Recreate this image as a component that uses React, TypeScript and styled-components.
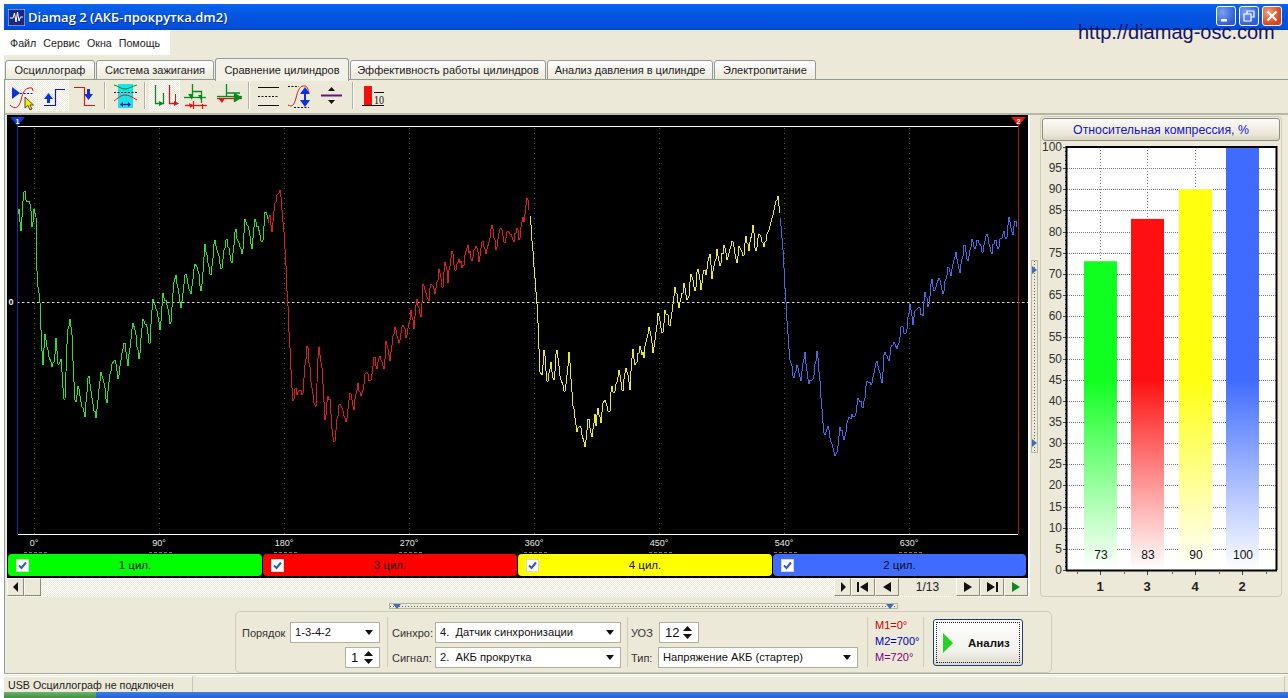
import React from "react";
import styled, { createGlobalStyle } from "styled-components";

const Global = createGlobalStyle`
  html, body { margin: 0; padding: 0; background: #fff; overflow: hidden; }
  #root { width: 1288px; height: 698px; }
  * { box-sizing: border-box; }
`;
const FONT = `"Liberation Sans", Arial, sans-serif`;

const Win = styled.div`
  position: relative; width: 1288px; height: 698px; padding: 4px 0 0 4px;
  display: flex; flex-direction: column; background: #fff; overflow: hidden;
  font-family: ${FONT}; font-size: 11px; color: #222;
`;
const TitleBar = styled.div`
  height: 26px; flex: none; display: flex; align-items: center; padding: 0 6px 0 4px;
  background: linear-gradient(180deg, #0a6af0 0%, #0560ea 12%, #0454e0 50%, #0450dc 85%, #0347c8 100%);
  color: #fff;
`;
const AppIcon = styled.svg`width: 17px; height: 17px; flex: none; margin-right: 3px;`;
const TitleText = styled.div`
  font-family: "Open Sans", ${FONT}; font-size: 13px; font-weight: 600; flex: 1;
  text-shadow: 1px 1px 0 #0a2f90;
`;
const WinBtns = styled.div`display: flex; gap: 3px; margin-top: -2px;`;
const WinBtn = styled.div<{ $close?: boolean }>`
  width: 20px; height: 20px; border: 1px solid #fff; border-radius: 3px; display: flex;
  align-items: center; justify-content: center;
  background: ${(p) => (p.$close ? "radial-gradient(circle at 30% 30%, #f0a080, #d8431c 70%)" : "radial-gradient(circle at 30% 30%, #7aa0f0, #2a5ce0 75%)")};
`;
const Url = styled.div`
  position: absolute; left: 1078px; top: 21px; font-size: 20px; color: #14146a; white-space: nowrap;
`;
const Beige = styled.div`background: #ece9d8;`;
const MenuRow = styled(Beige)`height: 27px; flex: none;`;
const MenuBar = styled.div`
  width: 166px; height: 25px; background: #fff; display: flex; align-items: center; gap: 7px; padding-left: 6px; font-size: 10.7px;
`;
const TabRow = styled(Beige)`height: 23px; flex: none; display: flex; align-items: flex-end; padding-left: 1px; gap: 1px;`;
const Tab = styled.div<{ $w: number; $on?: boolean }>`
  width: ${(p) => p.$w}px; height: ${(p) => (p.$on ? 23 : 20)}px; flex: none;
  border: 1px solid #919b9c; border-bottom: ${(p) => (p.$on ? "none" : "1px solid #919b9c")};
  border-radius: 3px 3px 0 0; display: flex; align-items: center; justify-content: center;
  background: ${(p) => (p.$on ? "#f4f2e8" : "linear-gradient(#fff, #ece9d8)")};
  margin-bottom: ${(p) => (p.$on ? -1 : 0)}px; position: relative; z-index: ${(p) => (p.$on ? 2 : 1)};
  white-space: nowrap; color: #222;
`;
const Main = styled(Beige)`
  flex: none; height: 594px; border-top: 1px solid #919b9c; border-left: 1px solid #919b9c;
  margin-top: -1px; display: flex; flex-direction: column;
`;
const Toolbar = styled.div`
  height: 35px; flex: none; display: flex; gap: 1px; padding: 0 0 2px 1px; align-items: flex-start;
  border-bottom: 2px solid #b8b6a8;
`;
const ToolBtn = styled.div<{ $on?: boolean }>`
  width: 31px; height: 31px; flex: none;
  ${(p) => p.$on && "background: repeating-conic-gradient(#fff 0 25%, #ece9d8 0 50%) 0 0 / 2px 2px; border: 1px solid #f8f7f0;"}
  svg { display: block; width: 31px; height: 31px; margin: ${(p) => (p.$on ? "-1px" : "0")}; }
`;
const ToolSep = styled.div<{ $l: number; $r: number }>`
  width: 2px; height: 27px; margin: 2px ${(p) => p.$r}px 0 ${(p) => p.$l}px; background: #b4b2a4; border-right: 1px solid #fff; flex: none;
`;
const ContentRow = styled.div`height: 482px; flex: none; display: flex; padding-left: 2px;`;
const LeftCol = styled.div`width: 1023px; flex: none; background: #fff; padding-right: 2px; display: flex; flex-direction: column;`;
const PlotBox = styled.div`width: 1021px; height: 463px; flex: none; background: #000; position: relative;`;
const PlotSvg = styled.svg`display: block; width: 1021px; height: 463px;`;
const Legend = styled.div`
  position: absolute; left: 1px; top: 439px; display: flex; gap: 1px;
`;
const LegendTile = styled.div<{ $c: string; $w: number }>`
  width: ${(p) => p.$w}px; height: 22px; background: ${(p) => p.$c}; border-radius: 4px; display: flex;
  align-items: center; position: relative; padding-left: 8px; color: #111;
`;
const LegendCheck = styled.div`
  width: 13px; height: 13px; background: #fff; border: 1px solid #d8d8d0; display: flex; align-items: center; justify-content: center; flex: none;
`;
const LegendText = styled.div`flex: 1; text-align: center; padding-right: 21px; font-size: 11.5px;`;
const ScrollRow = styled.div`
  height: 19px; flex: none; display: flex; padding-top: 0;
  background: repeating-conic-gradient(#fff 0 25%, #ece9d8 0 50%) 0 0 / 2px 2px;
`;
const SBtn = styled.div<{ $w: number }>`
  width: ${(p) => p.$w}px; height: 18px; flex: none; background: #ece9d8;
  border: 1px solid; border-color: #fbfaf4 #8d8b7e #8d8b7e #fbfaf4; display: flex; align-items: center; justify-content: center;
`;
const Spacer = styled.div`flex: 1;`;
const PageLabel = styled.div`
  width: 57px; height: 18px; flex: none; background: #ece9d8; display: flex; align-items: center; justify-content: center; font-size: 12px;
`;
const VSplit = styled.div`width: 10px; flex: none; padding: 145px 0 0 1px;`;
const VHandle = styled.div`
  width: 7px; height: 193px; border: 1px solid #b8b6a6; display: flex; flex-direction: column; align-items: center; justify-content: space-between; padding: 5px 0;
  background: repeating-linear-gradient(180deg, #666 0 1px, transparent 1px 3px) center / 1px 100% no-repeat;
`;
const Tri = styled.svg`display: block; flex: none;`;
const RightPanel = styled.div`
  width: 242px; height: 481px; margin-top: 1px; flex: none; border: 1px solid #cfccba; border-radius: 4px; padding: 1px;
  display: flex; flex-direction: column;
`;
const ChartBtn = styled.div`
  height: 23px; flex: none; border: 1px solid #8f8d80; border-radius: 3px; color: #1414c8; font-size: 12.3px;
  display: flex; align-items: center; justify-content: center; background: linear-gradient(#fbfaf6, #ece9d8 70%, #d8d5c4);
`;
const ChartSvg = styled.svg`display: block; width: 238px; height: 454px;`;
const HSplitRow = styled.div`height: 14px; flex: none; padding: 6px 0 0 384px;`;
const HHandle = styled.div`
  width: 509px; height: 6px; border: 1px solid #b8b6a6; display: flex; justify-content: space-between; align-items: center; padding: 0 3px;
  background: repeating-linear-gradient(90deg, #666 0 1px, transparent 1px 3px) center / 100% 1px no-repeat;
`;
const Controls = styled.div`
  margin-left: 230px; width: 817px; height: 62px; flex: none; border: 1px solid #cfccba; border-radius: 5px; display: flex; padding-top: 5px;
`;
const Section = styled.div<{ $w: number; $pl: number; $pr: number; $last?: boolean }>`
  width: ${(p) => p.$w}px; height: 50px; flex: none; padding: 5px ${(p) => p.$pr}px 0 ${(p) => p.$pl}px;
  ${(p) => !p.$last && "border-right: 1px solid #cfccba;"}
  display: flex; flex-direction: column; gap: 4px;
`;
const CtlRow = styled.div`height: 21px; display: flex; align-items: center; justify-content: space-between;`;
const CtlLabel = styled.div<{ $w?: number }>`
  ${(p) => p.$w && `width: ${p.$w}px;`} flex: none; color: #333; white-space: nowrap;
`;
const Field = styled.div<{ $w: number }>`
  width: ${(p) => p.$w}px; height: 21px; flex: none; background: #fff; border: 1px solid #b2af9d; display: flex; align-items: center;
  padding: 0 6px 0 4px; font-size: 11.2px; color: #111; white-space: pre; position: relative;
`;
const FieldText = styled.div`flex: 1; margin-top: -2px;`;
const SpinValue = styled.div`flex: 1; padding-left: 1px; font-size: 13px;`;
const SpinCol = styled.div`display: flex; flex-direction: column; gap: 3px;`;
const AutoRow = styled(CtlRow)`justify-content: flex-start;`;
const Marks = styled.div`display: flex; flex-direction: column; gap: 2px; margin-top: -3px;`;
const Mark = styled.div<{ $c: string }>`color: ${(p) => p.$c}; font-size: 11px; height: 14px; white-space: nowrap;`;
const RunBtn = styled.div`
  width: 90px; height: 47px; margin-top: -3px; border: 1px solid #1e3f78; border-radius: 3px; padding: 2px;
  background: linear-gradient(#fff, #f2f1ea 70%, #dcd9cc);
  display: flex;
`;
const RunInner = styled.div`
  flex: 1; border: 1px dotted #222; display: flex; align-items: center; padding-left: 6px; font-weight: 700; color: #111; font-size: 11.5px; gap: 15px;
`;
const StatusLine = styled(Beige)`height: 19px; flex: none; border-top: 1px solid #a8a698; display: flex; padding-top: 2px; box-shadow: inset 0 1px 0 #fff; position: relative;`;
const StatusCell = styled.div<{ $w?: number }>`
  ${(p) => (p.$w ? `width: ${p.$w}px; flex: none;` : "flex: 1;")} border-right: 1px solid #c8c6b8; border-top: 1px solid #fff; padding: 2px 0 0 4px; font-size: 10.7px; color: #222; white-space: nowrap;
  margin-right: 3px; border-left: 0;
`;
const Taskbar = styled.div`flex: 1; display: flex; background: linear-gradient(#3a7de8, #2460d0);`;
const StartBtn = styled.div`width: 92px; background: linear-gradient(#6fb36f, #3c8f3c);`;

/* ---------- waveform ---------- */
function rng(seed: number) {
  let a = seed;
  return () => {
    a |= 0; a = (a + 0x6d2b79f5) | 0;
    let t = Math.imul(a ^ (a >>> 15), 1 | a);
    t = (t + Math.imul(t ^ (t >>> 7), 61 | t)) ^ t;
    return ((t ^ (t >>> 14)) >>> 0) / 4294967296;
  };
}
type P = [number, number];
function lerp(a: P[], x: number) {
  for (let i = 1; i < a.length; i++) {
    if (x <= a[i][0]) {
      const k = (x - a[i - 1][0]) / (a[i][0] - a[i - 1][0] || 1);
      return a[i - 1][1] + k * (a[i][1] - a[i - 1][1]);
    }
  }
  return a[a.length - 1][1];
}
function zig(base: P[], amp: number, seed: number): P[] {
  const r = rng(seed);
  const out: P[] = [];
  let x = base[0][0]; let s = 1;
  const end = base[base.length - 1][0];
  while (x < end) {
    out.push([x, lerp(base, x) + s * amp * (0.25 + r() * 1.0)]);
    x += 2 + r() * 3.5; s = -s;
  }
  out.push([end, lerp(base, end)]);
  return out;
}
function fine(a: P[], amp: number, seed: number): string {
  const r = rng(seed);
  const pts: string[] = [];
  for (let x = a[0][0]; x <= a[a.length - 1][0]; x += 1.05) {
    pts.push(`${Math.round(x)},${Math.round(lerp(a, x) + (r() - 0.5) * amp)}`);
  }
  return pts.join(" ");
}
const greenA: P[] = [[18,213],[19,211],[21,230],[23,205],[25,184],[26,200],[28,200],[30,205],[32,232],[34,208],[36,220],[37,277],[40,303],[41,330],[43,368],[45,333],[47,345],[49,352],[51,367],[54,360],[56,337],[58,367],[61,360],[63,385],[65,407],[68,330],[71,318],[73,370],[75,407],[78,383],[81,400],[85,418],[89,370],[93,407],[96,417],[101,372],[104,382],[107,403],[111,370],[115,358],[118,383],[122,352],[125,342],[128,367],[133,322],[136,340],[139,360],[143,317],[147,328],[150,348],[153,298],[157,312],[160,332],[163,293],[167,305],[171,327],[175,273],[178,290],[181,310],[185,273],[188,283],[191,297],[195,263],[198,272],[201,293],[205,245],[208,262],[211,278],[215,240],[218,255],[221,272],[226,237],[229,250],[232,265],[236,228],[239,245],[242,257],[245,218],[249,232],[252,250],[255,217],[259,230],[262,247],[265,209],[268,222]];
const redHead: P[] = [[268,222],[270,215],[272,232],[275,205],[278,195],[279,188],[281,200],[283,225],[285,250],[287,290],[289,330],[291,370],[293,405],[296,385],[298,395],[300,388],[302,400],[305,365],[307,343],[310,370],[313,395],[316,412],[319,342],[323,387],[325,423],[327,400],[330,397],[332,430],[335,443],[338,415],[340,403],[343,410],[346,425]];
const redTail = zig([[346,412],[355,392],[375,368],[395,342],[415,312],[435,282],[455,264],[475,250],[495,240],[515,232],[524,225]], 15, 11);
const redA: P[] = [...redHead, ...redTail, [526,210],[528,196],[530,215]];
const yellowHead: P[] = [[530,215],[532,240],[535,275],[538,315],[541,385],[544,345],[547,385],[551,362],[554,385],[557,345],[561,380],[565,395],[569,350],[573,405],[577,430],[581,425],[585,448],[588,415],[592,436],[596,405]];
const yellowTail = zig([[596,425],[610,398],[630,368],[650,340],[670,310],[690,285],[710,268],[730,254],[750,243],[768,232]], 15, 23);
const yellowA: P[] = [...yellowHead, ...yellowTail, [772,218],[778,194],[780,215]];
const blueHead: P[] = [[780,215],[783,250],[786,300],[790,355],[793,378],[797,365],[801,378],[805,352],[809,385],[813,378],[817,350],[820,385],[824,435],[828,425],[832,445],[836,458],[840,425],[844,438]];
const blueTail = zig([[844,430],[860,400],[880,370],[900,335],[920,305],[940,280],[960,257],[980,247],[1000,240],[1018,226]], 14, 37);
const blueA: P[] = [...blueHead, ...blueTail];

const traces = [
  { c: "#2ee02e", p: fine(greenA, 5, 1) },
  { c: "#d82020", p: fine(redA, 6, 2) },
  { c: "#eaea24", p: fine(yellowA, 6, 3) },
  { c: "#4a68e8", p: fine(blueA, 6, 4) },
];
const gridX = [34, 159, 284, 409, 534, 659, 784, 909];
const degs = [0, 90, 180, 270, 360, 450, 540, 630];

const Plot = () => (
  <PlotSvg viewBox="7 115 1021 463">
    {gridX.map((x) => (
      <line key={x} x1={x + 0.5} x2={x + 0.5} y1={128} y2={534} stroke="#555" strokeDasharray="1 4" />
    ))}
    <line x1={17} x2={1028} y1={302.5} y2={302.5} stroke="#ddd" strokeDasharray="2.5 2.5" />
    <line x1={18} x2={1018} y1={126.5} y2={126.5} stroke="#fff" />
    <line x1={18} x2={1018} y1={534.5} y2={534.5} stroke="#fff" />
    <line x1={17.5} x2={17.5} y1={122} y2={534} stroke="#1a2aa8" strokeWidth={1} />
    <line x1={1018.5} x2={1018.5} y1={122} y2={534} stroke="#b01818" strokeWidth={1} />
    {traces.map((t) => (
      <polyline key={t.c} points={t.p} fill="none" stroke={t.c} strokeWidth={1} shapeRendering="crispEdges" />
    ))}
    <polygon points="10,117 25,117 17.5,126" fill="#1638c8" />
    <text x={17.5} y={124} textAnchor="middle" fontSize={7} fontWeight={700} fill="#fff" fontFamily="Liberation Sans">1</text>
    <polygon points="1011,117 1026,117 1018.5,126" fill="#e01818" />
    <text x={1018.5} y={124} textAnchor="middle" fontSize={7} fontWeight={700} fill="#fff" fontFamily="Liberation Sans">2</text>
    <text x={11} y={305} textAnchor="middle" fontSize={9} fontWeight={700} fill="#eee" fontFamily="Liberation Sans">0</text>
    {gridX.map((x, i) => (
      <g key={x}>
        <text x={x} y={546} textAnchor="middle" fontSize={9} fill="#e8e8e8" fontFamily="Liberation Sans">{degs[i]}°</text>
        <line x1={x - 10} x2={x + 13} y1={552.5} y2={552.5} stroke="#777" strokeDasharray="3 2" />
      </g>
    ))}
  </PlotSvg>
);

/* ---------- bars ---------- */
const Y = (v: number) => 570 - v * 4.23;
const bars = [
  { k: "g", c: "#10ff20", v: 73, x: 1084, n: "1" },
  { k: "r", c: "#ff1010", v: 83, x: 1131, n: "3" },
  { k: "y", c: "#ffff10", v: 90, x: 1179, n: "4" },
  { k: "b", c: "#3f6cff", v: 100, x: 1226, n: "2" },
];
const levels = Array.from({ length: 21 }, (_, i) => i * 5);
const minor = Array.from({ length: 101 }, (_, i) => i);
const Bars = () => (
  <ChartSvg viewBox="1042 141 238 454">
    <defs>
      {bars.map((b) => (
        <linearGradient key={b.k} id={`bar-${b.k}`} gradientUnits="userSpaceOnUse" x1="0" x2="0" y1="147" y2="570">
          <stop offset="0" stopColor={b.c} />
          <stop offset="0.55" stopColor={b.c} />
          <stop offset="1" stopColor="#fff" stopOpacity={0.95} />
        </linearGradient>
      ))}
    </defs>
    <rect x={1067} y={147} width={209} height={423} fill="#fff" />
    {bars.map((b) => (
      <line key={b.k} x1={b.x + 16.5} x2={b.x + 16.5} y1={147} y2={570} stroke="#777" strokeDasharray="1 2" />
    ))}
    {levels.map((v) => (
      <g key={v}>
        <line x1={1067} x2={1276} y1={Math.round(Y(v)) + 0.5} y2={Math.round(Y(v)) + 0.5} stroke="#777" strokeDasharray="1 1" />
        <text x={1062} y={Y(v) + 4} textAnchor="end" fontSize={12} fill="#333" fontFamily="Liberation Sans">{v}</text>
        <line x1={1063} x2={1066} y1={Math.round(Y(v)) + 0.5} y2={Math.round(Y(v)) + 0.5} stroke="#444" />
      </g>
    ))}
    {minor.map((v) => (
      <rect key={v} x={1065} y={Math.round(Y(v))} width={1} height={1} fill="#444" />
    ))}
    {bars.map((b) => (
      <g key={b.k}>
        <rect x={b.x} y={Y(b.v)} width={33} height={b.v * 4.23} fill="#fff" />
        <rect x={b.x} y={Y(b.v)} width={33} height={b.v * 4.23} fill={`url(#bar-${b.k})`} />
        <text x={b.x + 17} y={559} textAnchor="middle" fontSize={12} fill="#111" fontFamily="Liberation Sans">{b.v}</text>
        <line x1={b.x + 16.5} x2={b.x + 16.5} y1={571} y2={575} stroke="#444" />
        <text x={b.x + 16} y={591} textAnchor="middle" fontSize={13} fontWeight={700} fill="#222" fontFamily="Liberation Sans">{b.n}</text>
      </g>
    ))}
    <path d="M1067 147 H1276.5 V570" fill="none" stroke="#000" strokeWidth={2} />
    <line x1={1066.5} x2={1066.5} y1={146} y2={571} stroke="#000" strokeWidth={2} />
    <line x1={1066} x2={1277} y1={570.5} y2={570.5} stroke="#000" strokeWidth={2} />
    {[1077, 1124, 1172, 1219, 1266].map((x) => (
      <line key={x} x1={x + 0.5} x2={x + 0.5} y1={571} y2={574} stroke="#666" />
    ))}
  </ChartSvg>
);

/* ---------- small parts ---------- */
const Arrow = ({ dir, c = "#111", s = 8 }: { dir: "up" | "down" | "left" | "right"; c?: string; s?: number }) => {
  const pts = { up: "0,8 8,8 4,3", down: "0,2 8,2 4,7", left: "6,0 6,10 1,5", right: "2,0 2,10 7,5" }[dir];
  return (
    <Tri width={s} height={dir === "up" || dir === "down" ? 10 * (s / 8) : s + 2} viewBox="0 0 8 10">
      <polygon points={pts} fill={c} />
    </Tri>
  );
};
const Combo = ({ w, t }: { w: number; t: string }) => (
  <Field $w={w}>
    <FieldText>{t}</FieldText>
    <Arrow dir="down" />
  </Field>
);
const Spin = ({ w, t }: { w: number; t: string }) => (
  <Field $w={w}>
    <SpinValue>{t}</SpinValue>
    <SpinCol>
      <Tri width={9} height={5} viewBox="0 0 9 5"><polygon points="4.5,0 9,5 0,5" fill="#111" /></Tri>
      <Tri width={9} height={5} viewBox="0 0 9 5"><polygon points="0,0 9,0 4.5,5" fill="#111" /></Tri>
    </SpinCol>
  </Field>
);
const Check = () => (
  <LegendCheck>
    <svg width="9" height="9" viewBox="0 0 9 9"><path d="M1 4.5 L3.5 7 L8 1.5" fill="none" stroke="#2a5cc8" strokeWidth="2" /></svg>
  </LegendCheck>
);
const NavIcon = ({ d, c = "#111" }: { d: string; c?: string }) => (
  <svg width="14" height="12" viewBox="0 0 14 12"><path d={d} fill={c} /></svg>
);

/* ---------- toolbar icons ---------- */
const NAVY = "#101a9c"; const RED = "#d81818"; const GRN = "#0a8a1e"; const BLUE = "#0a30e0";
const icons: { on?: boolean; sep?: [number, number]; g?: React.ReactNode }[] = [
  { on: true, g: <>
    <polygon points="6,7 6,19 14,13" fill={BLUE} />
    <path d="M14 13.5 H27" stroke={NAVY} strokeDasharray="2 1.5" fill="none" />
    <path d="M4 25 C9 30 13 28 15 20 C17 11 20 7 26 8 L27 11" stroke={RED} fill="none" />
    <polygon points="19,17 19,28 22,25.5 24,30 26,29 24,25 27.5,25" fill="#ffe800" stroke="#222" strokeWidth=".8" />
  </> },
  { on: true, g: <>
    <path d="M10.5 23 V17" stroke={BLUE} strokeWidth="3" /><polygon points="6,19 15,19 10.5,13" fill={BLUE} />
    <path d="M6 25.5 H17.5 V9.5 H27" stroke={NAVY} strokeWidth="1.2" fill="none" />
  </> },
  { g: <>
    <path d="M4 7.5 H14.5 V25.5 H25" stroke={RED} strokeWidth="1.2" fill="none" />
    <path d="M18.5 9 V15" stroke={BLUE} strokeWidth="3" /><polygon points="14,14 23,14 18.5,20" fill={BLUE} />
  </> },
  { sep: [2, 3] },
  { g: <>
    <rect x="8" y="4" width="15" height="24" fill="#18e4e8" />
    <path d="M4 5 C8 6 11 9 15 9 C19 9 22 6 27 5" stroke={GRN} fill="none" />
    <path d="M4 12.5 H27" stroke="#111" strokeDasharray="2 1.5" />
    <path d="M4 21 C8 18 11 15 15 15 C19 15 22 17 27 20" stroke={RED} fill="none" />
    <path d="M12 24.5 H19" stroke={NAVY} strokeWidth="1.3" /><polygon points="10,24.5 13,22 13,27" fill={NAVY} /><polygon points="21,24.5 18,22 18,27" fill={NAVY} />
  </> },
  { sep: [2, 2] },
  { on: true, g: <>
    <path d="M6.5 5 V23.5 H14.5 V13" stroke={GRN} strokeWidth="1.3" fill="none" /><polygon points="10,21 15,23.5 10,26" fill={GRN} />
    <path d="M20.5 5 V23.5 H28" stroke={RED} strokeWidth="1.3" fill="none" /><path d="M26.5 14 V23" stroke={RED} /><polygon points="25,21 30,23.5 25,26" fill={RED} />
  </> },
  { g: <>
    <path d="M3 17.5 H25" stroke={GRN} strokeWidth="1.3" />
    <path d="M11.5 4 V17 M11.5 11.5 H20.5 V23" stroke={GRN} strokeWidth="1.3" fill="none" />
    <polygon points="7,14 12,14 11,20" fill={GRN} /><polygon points="17,15 21,15 20,20" fill={GRN} />
    <path d="M4 25.5 H26" stroke={RED} strokeWidth="1.3" /><path d="M12.5 21 V29 M21.5 24 V29" stroke={RED} strokeWidth="1.2" />
    <polygon points="8,23 13,25.5 9,28" fill={RED} />
  </> },
  { g: <>
    <path d="M4 18.5 H29" stroke={RED} strokeWidth="1.3" />
    <path d="M4 16.5 H29" stroke={GRN} strokeWidth="1.3" />
    <path d="M13.5 4 V17 M13.5 13 H27 M21.5 13 V22" stroke={GRN} strokeWidth="1.3" fill="none" />
    <polygon points="22,13 29,17.5 22,22" fill={GRN} /><polygon points="5,18 12,18 9,23" fill={RED} />
  </> },
  { sep: [3, 2] },
  { g: <>
    <path d="M5 7.5 H26 M5 25.5 H26" stroke="#111" strokeWidth="1.2" /><path d="M5 16.5 H26" stroke="#111" strokeDasharray="2 1.5" />
  </> },
  { g: <>
    <path d="M3 6.5 H14 M9 27.5 H24" stroke="#111" strokeDasharray="2 1.5" />
    <path d="M3 25 C7 27 9 26 11 18 C13 10 15 5 20 6 C22 6 23 9 24 13" stroke={RED} fill="none" />
    <path d="M20 12 V22" stroke={BLUE} strokeWidth="2" /><polygon points="15,14 25,14 20,7" fill={BLUE} /><polygon points="15,20 25,20 20,27" fill={BLUE} />
  </> },
  { g: <>
    <polygon points="11,11 18,11 14.5,7" fill="#111" />
    <path d="M4 15.5 H25" stroke="#6a1080" strokeWidth="2" />
    <polygon points="11,20 18,20 14.5,24" fill="#111" />
  </> },
  { sep: [3, 3] },
  { g: <>
    <rect x="6" y="6" width="8" height="19" fill="#f01010" />
    <path d="M4 25.5 H26" stroke="#111" />
    <path d="M16 12.5 H26" stroke="#111" />
    <text x="21" y="23.5" textAnchor="middle" fontFamily="Liberation Serif" fontSize="13" fill="#111" textLength="10" lengthAdjust="spacingAndGlyphs">10</text>
  </> },
];

const tabs = [
  { t: "Осциллограф", w: 90 },
  { t: "Система зажигания", w: 118 },
  { t: "Сравнение цилиндров", w: 134, on: true },
  { t: "Эффективность работы цилиндров", w: 196 },
  { t: "Анализ давления в цилиндре", w: 166 },
  { t: "Электропитание", w: 102 },
];
const legend = [
  { t: "1 цил.", c: "#00ff00", w: 254 },
  { t: "3 цил.", c: "#ff0000", w: 254 },
  { t: "4 цил.", c: "#ffff00", w: 254 },
  { t: "2 цил.", c: "#3f6cff", w: 253 },
];

export default function App() {
  return (
    <Win>
      <Global />
      <TitleBar>
        <AppIcon viewBox="0 0 17 17">
          <rect width="17" height="17" fill="#1a2a80" stroke="#dfe6ff" />
          <path d="M2 9 H5 L6.5 4 L8 13 L9.5 3 L11 12 L12.5 8 H15" stroke="#fff" fill="none" />
        </AppIcon>
        <TitleText>Diamag 2 (АКБ-прокрутка.dm2)</TitleText>
        <WinBtns>
          <WinBtn><svg width="12" height="12" viewBox="0 0 12 12"><rect x="1" y="9" width="6" height="2.5" fill="#fff" /></svg></WinBtn>
          <WinBtn><svg width="12" height="12" viewBox="0 0 12 12"><path d="M4 3.5 V1 H11 V7 H8 M1 4 H8 V11 H1 Z" fill="none" stroke="#fff" strokeWidth="1.2" /></svg></WinBtn>
          <WinBtn $close><svg width="12" height="12" viewBox="0 0 12 12"><path d="M1.5 1.5 L10.5 10.5 M10.5 1.5 L1.5 10.5" stroke="#fff" strokeWidth="2.2" /></svg></WinBtn>
        </WinBtns>
      </TitleBar>
      <Url>http://diamag-osc.com</Url>
      <MenuRow>
        <MenuBar>
          <span>Файл</span><span>Сервис</span><span>Окна</span><span>Помощь</span>
        </MenuBar>
      </MenuRow>
      <TabRow>
        {tabs.map((t) => <Tab key={t.t} $w={t.w} $on={t.on}>{t.t}</Tab>)}
      </TabRow>
      <Main>
        <Toolbar>
          {icons.map((ic, i) =>
            ic.sep ? <ToolSep key={i} $l={ic.sep[0]} $r={ic.sep[1]} /> : (
              <ToolBtn key={i} $on={ic.on}><svg viewBox="0 0 31 31">{ic.g}</svg></ToolBtn>
            )
          )}
        </Toolbar>
        <ContentRow>
          <LeftCol>
            <PlotBox>
              <Plot />
              <Legend>
                {legend.map((l) => (
                  <LegendTile key={l.t} $c={l.c} $w={l.w}>
                    <Check /><LegendText>{l.t}</LegendText>
                  </LegendTile>
                ))}
              </Legend>
            </PlotBox>
            <ScrollRow>
              <SBtn $w={17}><Arrow dir="left" /></SBtn>
              <SBtn $w={17} />
              <Spacer />
              <SBtn $w={17}><Arrow dir="right" /></SBtn>
              <SBtn $w={24}><NavIcon d="M1 1 H3 V11 H1 Z M12 1 V11 L4 6 Z" /></SBtn>
              <SBtn $w={24}><NavIcon d="M11 1 V11 L3 6 Z" /></SBtn>
              <PageLabel>1/13</PageLabel>
              <SBtn $w={24}><NavIcon d="M3 1 V11 L11 6 Z" /></SBtn>
              <SBtn $w={24}><NavIcon d="M2 1 V11 L10 6 Z M11 1 H13 V11 H11 Z" /></SBtn>
              <SBtn $w={24}><NavIcon d="M3 1 V11 L11 6 Z" c="#0a8a1e" /></SBtn>
            </ScrollRow>
          </LeftCol>
          <VSplit>
            <VHandle>
              <Tri width={5} height={8} viewBox="0 0 5 8"><polygon points="0,0 5,4 0,8" fill="#3c6cc0" /></Tri>
              <Tri width={5} height={8} viewBox="0 0 5 8"><polygon points="0,0 5,4 0,8" fill="#3c6cc0" /></Tri>
            </VHandle>
          </VSplit>
          <RightPanel>
            <ChartBtn>Относительная компрессия, %</ChartBtn>
            <Bars />
          </RightPanel>
        </ContentRow>
        <HSplitRow>
          <HHandle>
            <Tri width={8} height={5} viewBox="0 0 8 5"><polygon points="0,0 8,0 4,5" fill="#3c6cc0" /></Tri>
            <Tri width={8} height={5} viewBox="0 0 8 5"><polygon points="0,0 8,0 4,5" fill="#3c6cc0" /></Tri>
          </HHandle>
        </HSplitRow>
        <Controls>
          <Section $w={152} $pl={6} $pr={7}>
            <CtlRow><CtlLabel>Порядок</CtlLabel><Combo w={90} t="1-3-4-2" /></CtlRow>
            <CtlRow><span /><Spin w={35} t="1" /></CtlRow>
          </Section>
          <Section $w={240} $pl={4} $pr={6}>
            <CtlRow><CtlLabel>Синхро:</CtlLabel><Combo w={186} t="4.  Датчик синхронизации" /></CtlRow>
            <CtlRow><CtlLabel>Сигнал:</CtlLabel><Combo w={186} t="2.  АКБ прокрутка" /></CtlRow>
          </Section>
          <Section $w={240} $pl={3} $pr={8}>
            <AutoRow><CtlLabel $w={28}>УОЗ</CtlLabel><Spin w={40} t="12" /></AutoRow>
            <AutoRow><CtlLabel $w={27}>Тип:</CtlLabel><Combo w={200} t="Напряжение АКБ (стартер)" /></AutoRow>
          </Section>
          <Section $w={56} $pl={7} $pr={0}>
            <Marks>
              <Mark $c="#c80000">M1=0°</Mark>
              <Mark $c="#0000b0">M2=700°</Mark>
              <Mark $c="#800080">M=720°</Mark>
            </Marks>
          </Section>
          <Section $w={120} $pl={9} $pr={0} $last>
            <RunBtn>
              <RunInner>
                <svg width="10" height="20" viewBox="0 0 10 20"><polygon points="0,0 10,10 0,20" fill="#22d422" /></svg>
                Анализ
              </RunInner>
            </RunBtn>
          </Section>
        </Controls>
      </Main>
      <StatusLine>
        <StatusCell $w={189}>USB Осциллограф не подключен</StatusCell>
        <StatusCell />
      </StatusLine>
      <Taskbar><StartBtn /></Taskbar>
    </Win>
  );
}
